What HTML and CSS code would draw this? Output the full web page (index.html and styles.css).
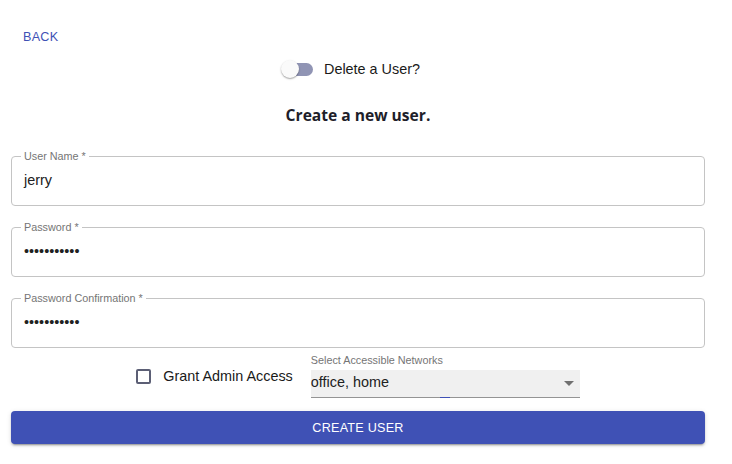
FILE: index.html
```html
<!DOCTYPE html>
<html lang="en">
<head>
<meta charset="utf-8">
<title>Create user</title>
<link rel="stylesheet" href="styles.css">
</head>
<body>
<main class="page">
  <a class="back" href="#">BACK</a>
  <div class="toggle-row">
    <label class="toggle">
      <span class="switch"><span class="track"></span><span class="thumb"></span></span>
      <span class="toggle-label">Delete a User?</span>
    </label>
  </div>
  <h1 class="title">Create a new user.</h1>
  <form class="form">
    <fieldset class="field">
      <legend>User Name *</legend>
      <div class="value">jerry</div>
    </fieldset>
    <fieldset class="field">
      <legend>Password *</legend>
      <div class="value dots">•••••••••••</div>
    </fieldset>
    <fieldset class="field">
      <legend>Password Confirmation *</legend>
      <div class="value dots">•••••••••••</div>
    </fieldset>
    <div class="options">
      <label class="check">
        <span class="box"></span>
        <span class="check-label">Grant Admin Access</span>
      </label>
      <div class="select-group">
        <div class="select-label">Select Accessible Networks</div>
        <div class="select">
          <span class="select-value">office, home</span>
          <svg class="arrow" width="10" height="5" viewBox="0 0 10 5"><path d="M0 0h10L5 5z" fill="#707070"/></svg>
        </div>
      </div>
    </div>
    <button class="submit" type="button">CREATE USER</button>
  </form>
</main>
</body>
</html>
```
FILE: styles.css
```css
* { box-sizing: border-box; }
html, body { margin: 0; padding: 0; background: #fff; }
body {
  font-family: "Liberation Sans", Arial, sans-serif;
  color: #212121;
  width: 732px;
  height: 464px;
  overflow: hidden;
}
.page {
  display: flex;
  flex-direction: column;
  padding: 0 27px 0 11px;
}
.back {
  align-self: flex-start;
  margin: 27px 0 0 12px;
  font-size: 12.6px;
  line-height: 20px;
  color: #3f51b5;
  text-decoration: none;
  letter-spacing: 0.02em;
}
.toggle-row {
  display: flex;
  justify-content: center;
  margin-top: 12px;
}
.toggle {
  display: flex;
  align-items: center;
  gap: 11px;
  margin-right: 16.5px;
}
.switch {
  position: relative;
  width: 33.5px;
  height: 20px;
  display: block;
}
.track {
  position: absolute;
  left: 3px;
  top: 4px;
  width: 30.5px;
  height: 12.6px;
  border-radius: 7px;
  background: #9094b4;
}
.thumb {
  position: absolute;
  left: 1px;
  top: 1px;
  width: 18px;
  height: 18px;
  border-radius: 50%;
  background: #fafafa;
  box-shadow: 0 1px 2px rgba(0,0,0,.25), 0 1px 1px rgba(0,0,0,.14);
}
.toggle-label {
  font-size: 14.4px;
  line-height: 20px;
  color: #1a1a1a;
}
.title {
  margin: 26px 0 0;
  text-align: center;
  font-family: "Open Sans", "Liberation Sans", sans-serif;
  font-weight: 700;
  font-size: 15.6px;
  line-height: 20px;
  color: #1e1e2a;
}
.form {
  display: flex;
  flex-direction: column;
  margin-top: 25px;
}
.field {
  margin: 0 0 15px;
  padding: 0 12px 7px;
  border: 1px solid #c4c4c4;
  border-radius: 4px;
  min-width: 0;
}
.field legend {
  margin-left: -3px;
  padding: 0 3px;
  font-size: 10.8px;
  line-height: 12px;
  color: #757575;
}
.value {
  height: 36px;
  line-height: 36px;
  font-size: 14.4px;
  color: #212121;
}
.dots {
  font-size: 14.4px;
}
.options {
  display: flex;
  justify-content: center;
  align-items: center;
  margin-top: -9px;
}
.check {
  display: flex;
  align-items: center;
  gap: 12px;
  margin-right: 18px;
}
.box {
  width: 15px;
  height: 15px;
  border: 2px solid #5c5f75;
  border-radius: 2px;
  display: block;
}
.check-label {
  font-size: 14.4px;
  line-height: 20px;
  color: #1a1a1a;
}
.select-group {
  display: flex;
  flex-direction: column;
  width: 269px;
}
.select-label {
  font-size: 10.8px;
  line-height: 12px;
  color: #757575;
  margin-bottom: 4px;
}
.select {
  position: relative;
  display: flex;
  align-items: flex-start;
  justify-content: space-between;
  height: 28px;
  padding-top: 2px;
  background: #f0f0f0;
  border-bottom: 1px solid #949494;
}
.select::after {
  content: "";
  position: absolute;
  left: 129px;
  bottom: -1px;
  width: 10px;
  height: 1px;
  background: #3f51b5;
}
.select-value {
  font-size: 14.4px;
  line-height: 20px;
  color: #212121;
}
.arrow {
  margin: 9px 6px 0 0;
}
.submit {
  margin-top: 13px;
  height: 33px;
  border: 0;
  border-radius: 4px;
  background: #3f51b5;
  color: #fff;
  font-family: "Liberation Sans", Arial, sans-serif;
  font-size: 12.6px;
  letter-spacing: 0.02em;
  box-shadow: 0 3px 1px -2px rgba(0,0,0,.2), 0 2px 2px 0 rgba(0,0,0,.14), 0 1px 5px 0 rgba(0,0,0,.12);
}
```
